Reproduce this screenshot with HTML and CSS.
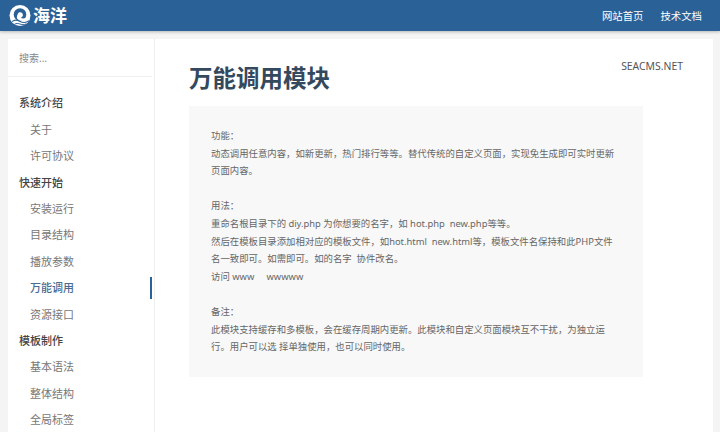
FILE: index.html
```html
<!DOCTYPE html>
<html lang="en">
<head>
    <meta charset="UTF-8">
    <title>万能调用模块</title>
    <link rel="stylesheet" href="styles.css">
</head>
<body>
    <header class="topbar">
        <a class="logo" href="#">
            <svg class="logo-mark" width="22" height="23" viewBox="0 0 22 23">
                <circle cx="11" cy="11.500" r="10.500" fill="#fff"/>
                <circle cx="11" cy="10.500" r="6.300" fill="#2a6196"/>
                <path fill="#fff" d="M10 8.500c2.200-.8 4.200.8 3.900 2.800-.2 1.300-1.200 2.200-2.400 2.500 2 1 4.800 1 7-.7l-1 3.600c-3 .8-6.500.2-8.500-1.300-1.200-.9-1.300-2-1-3 .3-1.900 1-3.400 2-3.900z"/>
                <path fill="none" stroke="#2a6196" stroke-width="1.100" d="M3 17.600c2.600-2 5.400-1.600 7.600-.4 3 1.600 6.500 1.800 9.400-.4"/>
                <path fill="none" stroke="#2a6196" stroke-width="1" d="M5.500 20.300c2-1.200 3.900-.9 5.600-.2 2 .8 4 .8 6-.2"/>
            </svg>
            <span class="logo-text">海洋</span>
        </a>
        <nav class="topnav">
            <a href="#">网站首页</a>
            <a href="#">技术文档</a>
        </nav>
    </header>
    <div class="page">
        <aside class="sidebar">
            <div class="search">搜索...</div>
            <ul class="menu">
                <li class="group">系统介绍</li>
                <li>关于</li>
                <li>许可协议</li>
                <li class="group">快速开始</li>
                <li>安装运行</li>
                <li>目录结构</li>
                <li>播放参数</li>
                <li class="active">万能调用</li>
                <li>资源接口</li>
                <li class="group">模板制作</li>
                <li>基本语法</li>
                <li>整体结构</li>
                <li>全局标签</li>
            </ul>
        </aside>
        <main class="content">
            <div class="site-name">SEACMS.NET</div>
            <h1>万能调用模块</h1>
            <pre class="code">功能&#xFF1A;
动态调用任意内容&#xFF0C;如新更新&#xFF0C;热门排行等等。替代传统的自定义页面&#xFF0C;实现免生成即可实时更新
页面内容。

用法&#xFF1A;
重命名根目录下的 diy.php 为你想要的名字&#xFF0C;如 hot.php  new.php等等。
然后在模板目录添加相对应的模板文件&#xFF0C;如hot.html  new.html等&#xFF0C;模板文件名保持和此PHP文件
名一致即可。如需即可。如的名字  协件改名。
访问 www     wwwww

备注&#xFF1A;
此模块支持缓存和多模板&#xFF0C;会在缓存周期内更新。此模块和自定义页面模块互不干扰&#xFF0C;为独立运
行。用户可以选 择单独使用&#xFF0C;也可以同时使用。</pre>
        </main>
    </div>
</body>
</html>
```

FILE: styles.css
```css
html, body {
    margin: 0;
    padding: 0;
    height: 432px;
    overflow: hidden;
}
body {
    font-family: "Noto Sans", "Noto Sans CJK SC", sans-serif;
    background-color: #f4f4f4;
    color: #555;
}
.topbar {
    height: 31px;
    background-color: #2a6196;
    box-shadow: 0 1px 3px rgba(0, 0, 0, 0.25);
    display: flex;
    align-items: center;
    justify-content: space-between;
    padding: 0 18px 0 9px;
}
.topbar a {
    color: #fff;
    text-decoration: none;
}
.logo {
    display: flex;
    align-items: center;
    gap: 2px;
}
.logo-text {
    font-size: 17px;
    font-weight: 700;
    line-height: 22px;
}
.topnav {
    display: flex;
    gap: 17px;
    font-size: 10.4px;
}
.page {
    display: flex;
    margin: 8px 7px 0 8px;
    height: 393px;
}
.sidebar {
    width: 146px;
    flex: none;
    background-color: #fff;
    border-right: 1px solid #eee;
    overflow: hidden;
}
.search {
    height: 37px;
    line-height: 38px;
    padding-left: 11px;
    margin-right: 2px;
    font-size: 10px;
    color: #888;
    border-bottom: 1px solid #eee;
}
.menu {
    list-style: none;
    margin: 13.4px 0 0;
    padding: 0;
    font-size: 11px;
}
.menu li {
    height: 26.4px;
    line-height: 26.4px;
    padding-left: 22px;
    color: #777;
    position: relative;
}
.menu .group {
    padding-left: 11px;
    font-weight: 500;
    color: #444;
}
.menu .active {
    color: #4a6a8f;
    font-weight: 500;
}
.menu .active::after {
    content: "";
    position: absolute;
    right: 2px;
    top: 2px;
    width: 2px;
    height: 22px;
    background-color: #2a6196;
}
.content {
    flex: 1;
    background-color: #fff;
    padding: 0 70px 0 34px;
    position: relative;
}
.site-name {
    position: absolute;
    top: 20px;
    right: 30px;
    font-size: 10.4px;
    color: #555;
}
h1 {
    margin: 0;
    padding-top: 21px;
    height: 46px;
    line-height: 36px;
    font-size: 23.5px;
    font-weight: 700;
    color: #34495e;
}
.code {
    margin: 0;
    height: 271px;
    box-sizing: border-box;
    padding: 21px 22px;
    background-color: #f8f8f8;
    font-family: inherit;
    font-size: 9.4px;
    line-height: 17.6px;
    color: #666;
    white-space: pre;
}
```
